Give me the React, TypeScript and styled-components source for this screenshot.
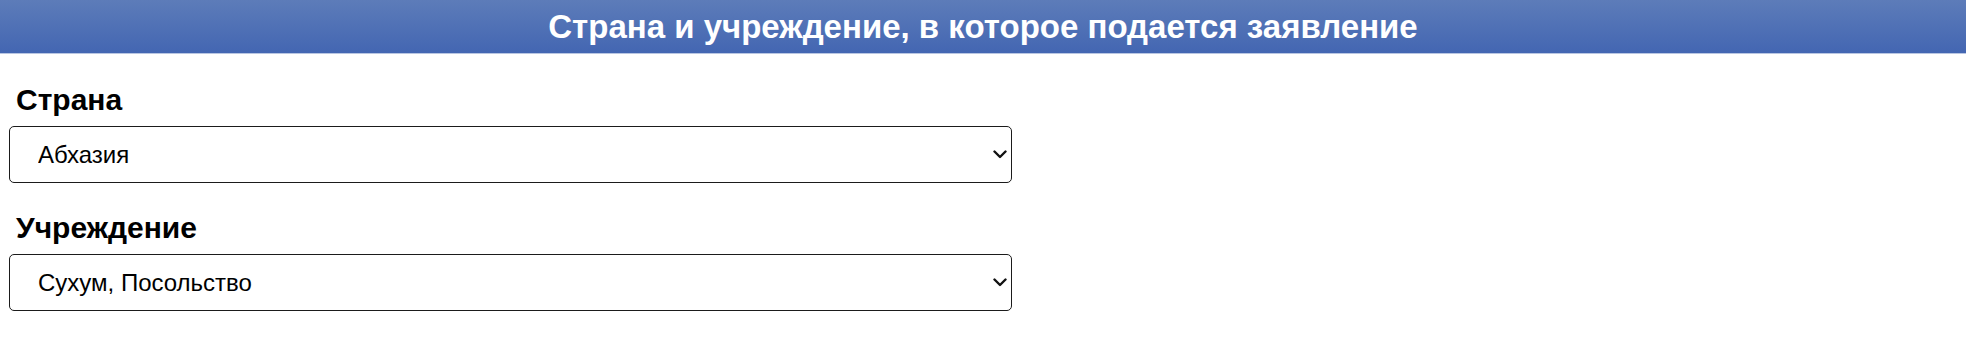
import React from 'react';
import styled, { createGlobalStyle } from 'styled-components';

const GlobalStyle = createGlobalStyle`
  html {
    box-sizing: border-box;
    -webkit-font-smoothing: antialiased;
  }

  *, *::before, *::after {
    box-sizing: inherit;
  }

  body {
    margin: 0;
    background: #ffffff;
    color: #000000;
    font-family: "Liberation Sans", Arial, Helvetica, sans-serif;
  }
`;

const Header = styled.header`
  height: 54px;
  display: flex;
  align-items: center;
  justify-content: center;
  background: linear-gradient(to bottom, #5d7cb9 0%, #4366b2 100%);
  border-bottom: 1px solid #b9c6e2;
`;

const HeaderTitle = styled.h1`
  margin: 0;
  color: #ffffff;
  font-size: 33px;
  font-weight: 700;
  line-height: 36px;
`;

const Form = styled.main`
  display: flex;
  flex-direction: column;
  padding: 30px 0 0 9px;
`;

const Field = styled.div`
  display: flex;
  flex-direction: column;
  gap: 10px;
  margin-bottom: 29px;
`;

const Label = styled.label`
  display: block;
  padding-left: 7px;
  font-size: 30px;
  font-weight: 700;
  line-height: 32px;
`;

const SelectWrap = styled.div`
  position: relative;
  width: 1003px;
`;

const Select = styled.select`
  appearance: none;
  -webkit-appearance: none;
  display: block;
  width: 100%;
  height: 57px;
  padding: 0 40px 0 28px;
  border: 1px solid #1b1b1b;
  border-radius: 5px;
  background: #ffffff;
  color: #000000;
  font-family: "Liberation Sans", Arial, Helvetica, sans-serif;
  font-size: 24px;
  outline: none;
`;

const Chevron = styled.svg`
  position: absolute;
  right: 5px;
  top: 50%;
  width: 14px;
  height: 9px;
  margin-top: -5px;
  pointer-events: none;
`;

interface SelectFieldProps {
  id: string;
  label: string;
  value: string;
}

const SelectField: React.FC<SelectFieldProps> = ({ id, label, value }) => (
  <Field>
    <Label htmlFor={id}>{label}</Label>
    <SelectWrap>
      <Select id={id} defaultValue={value}>
        <option value={value}>{value}</option>
      </Select>
      <Chevron viewBox="0 0 14 9" aria-hidden="true">
        <path
          d="M1.5 1.5 L7 7 L12.5 1.5"
          fill="none"
          stroke="#111"
          strokeWidth="2.4"
          strokeLinecap="round"
          strokeLinejoin="round"
        />
      </Chevron>
    </SelectWrap>
  </Field>
);

const App: React.FC = () => (
  <>
    <GlobalStyle />
    <Header>
      <HeaderTitle>Страна и учреждение, в которое подается заявление</HeaderTitle>
    </Header>
    <Form>
      <SelectField id="country" label="Страна" value="Абхазия" />
      <SelectField id="office" label="Учреждение" value="Сухум, Посольство" />
    </Form>
  </>
);

export default App;
